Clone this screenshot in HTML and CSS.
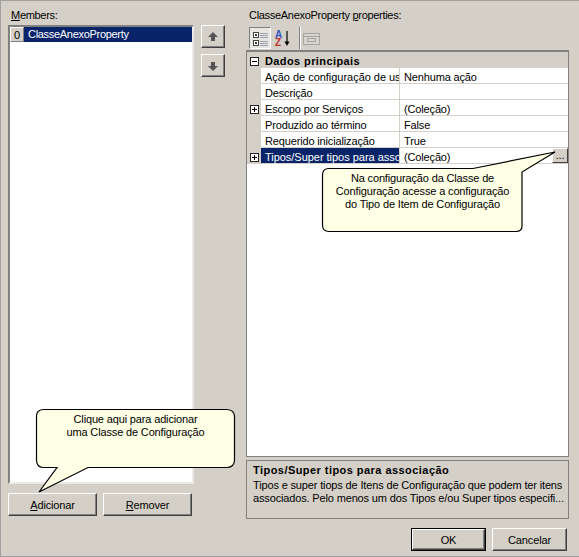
FILE: index.html
```html
<!DOCTYPE html>
<html lang="pt">
<head>
<meta charset="utf-8">
<title>Members</title>
<link rel="stylesheet" href="styles.css">
</head>
<body>
<div class="dialog">
  <div class="columns">
    <section class="members">
      <label class="caption"><u>M</u>embers:</label>
      <div class="members-body">
        <div class="listbox">
          <div class="list-row"><span class="index">0</span><span class="item">ClasseAnexoProperty</span></div>
        </div>
        <div class="arrows">
          <button class="btn arrow"><svg width="12" height="12" viewBox="0 0 12 12"><path d="M6 1 L11 6 H8 V10 H4 V6 H1 Z" fill="#555"/></svg></button>
          <button class="btn arrow"><svg width="12" height="12" viewBox="0 0 12 12"><path d="M6 11 L11 6 H8 V2 H4 V6 H1 Z" fill="#555"/></svg></button>
        </div>
      </div>
      <div class="list-actions">
        <button class="btn"><u>A</u>dicionar</button>
        <button class="btn"><u>R</u>emover</button>
      </div>
    </section>
    <section class="props">
      <label class="caption">ClasseAnexoProperty <u>p</u>roperties:</label>
      <div class="toolbar">
        <span class="tool active"><svg width="18" height="18" viewBox="0 0 18 18"><rect x="2.500" y="3.500" width="5" height="5" fill="#fff" stroke="#444"/><path d="M4 6h2M5 5v2" stroke="#000"/><rect x="2.500" y="11.500" width="5" height="5" fill="#fff" stroke="#444"/><path d="M4 14h2M5 13v2" stroke="#000"/><path d="M9 4.500h8M9 6.500h8M9 8.500h8M9 12.500h8M9 14.500h8M9 16.500h8" stroke="#9aa0b0"/></svg></span>
        <span class="tool"><svg width="20" height="20" viewBox="0 0 20 20"><text x="2" y="10" class="az a">A</text><text x="2" y="18" class="az z">Z</text><path d="M14 3v12" stroke="#000" stroke-width="1.200"/><path d="M11.500 13.500l2.500 4.500 2.500-4.500z" fill="#000"/></svg></span>
        <span class="tool-sep"></span>
        <span class="tool tool-wide"><svg width="18" height="14" viewBox="0 0 18 14"><rect x="0.500" y="2.500" width="16" height="11" fill="#d8d5ce" stroke="#a5a39e"/><path d="M1 5.500h15" stroke="#a5a39e"/><rect x="4.500" y="7.500" width="8" height="3" fill="none" stroke="#a5a39e"/></svg></span>
      </div>
      <div class="grid">
        <div class="category"><span class="gutter"><svg class="expander" width="9" height="9" viewBox="0 0 9 9"><rect x="0.500" y="0.500" width="8" height="8" fill="#fff" stroke="#222"/><path d="M2 4.500h5" stroke="#000"/></svg></span><span class="category-name">Dados principais</span></div>
        <div class="prop"><span class="gutter"></span><span class="name long">Ação de configuração de usuário</span><span class="value">Nenhuma ação</span></div>
        <div class="prop"><span class="gutter"></span><span class="name">Descrição</span><span class="value"></span></div>
        <div class="prop"><span class="gutter"><svg class="expander" width="9" height="9" viewBox="0 0 9 9"><rect x="0.500" y="0.500" width="8" height="8" fill="#fff" stroke="#222"/><path d="M2 4.500h5M4.500 2v5" stroke="#000"/></svg></span><span class="name">Escopo por Serviços</span><span class="value">(Coleção)</span></div>
        <div class="prop"><span class="gutter"></span><span class="name">Produzido ao término</span><span class="value">False</span></div>
        <div class="prop"><span class="gutter"></span><span class="name">Requerido inicialização</span><span class="value">True</span></div>
        <div class="prop current"><span class="gutter"><svg class="expander" width="9" height="9" viewBox="0 0 9 9"><rect x="0.500" y="0.500" width="8" height="8" fill="#fff" stroke="#222"/><path d="M2 4.500h5M4.500 2v5" stroke="#000"/></svg></span><span class="name long">Tipos/Super tipos para associação</span><span class="value">(Coleção)<span class="ellipsis">...</span></span></div>
      </div>
      <div class="help">
        <strong>Tipos/Super tipos para associação</strong>
        <p>Tipos e super tiops de Itens de Configuração que podem ter itens<br>associados. Pelo menos um dos Tipos e/ou Super tipos especifi...</p>
      </div>
    </section>
  </div>
  <div class="footer">
    <button class="btn default">OK</button>
    <button class="btn">Cancelar</button>
  </div>

  <div class="callout callout-grid">
    <svg width="236" height="84" viewBox="0 0 236 84"><path d="M7 18.500 H152 L234 2 L201 22 V76 Q201 81.500 195 81.500 H8 Q1.500 81.500 1.500 75 V25 Q1.500 19 7 18.500 Z" fill="#ffffe6" stroke="#000" stroke-width="1.200"/></svg>
    <p>Na configuração da Classe de<br>Configuração acesse a configuração<br>do Tipo de Item de Configuração</p>
  </div>
  <div class="callout callout-add">
    <svg width="202" height="86" viewBox="0 0 202 86"><path d="M8 1.500 H192 Q199 2 199.500 8 V52 Q199.500 59 192 59.500 H53 L4 84 L22 59.500 H8 Q1.500 59 1.500 52 V8 Q1.500 2 8 1.500 Z" fill="#ffffe6" stroke="#000" stroke-width="1.200"/></svg>
    <p>Clique aqui para adicionar<br>uma Classe de Configuração</p>
  </div>
</div>
</body>
</html>
```
FILE: styles.css
```css
* { box-sizing: border-box; }
html, body { margin: 0; padding: 0; }
body {
  width: 579px;
  height: 557px;
  overflow: hidden;
  font-family: "Liberation Sans", Arial, sans-serif;
  font-size: 11px;
  letter-spacing: -0.15px;
  color: #000;
  background: #d4d0c8;
}
.dialog {
  position: relative;
  width: 579px;
  height: 557px;
  padding: 8px 10px 5px 7px;
  display: flex;
  flex-direction: column;
  border-top: 1px solid #a0a0a0;
  border-left: 1px solid #a0a0a0;
  border-bottom: 1px solid #a0a0a0;
}
.columns { display: flex; flex: 1; gap: 21px; min-height: 0; }
.caption { display: block; height: 16px; line-height: 13px; padding-left: 3px; letter-spacing: -0.3px; }
.members { width: 217px; flex: none; display: flex; flex-direction: column; }
.members-body { display: flex; gap: 7px; }
.listbox {
  width: 186px;
  height: 459px;
  background: #fff;
  border: 2px solid;
  border-color: #808080 #eceae6 #eceae6 #808080;
}
.list-row { display: flex; height: 15px; line-height: 14px; }
.index {
  width: 14px;
  text-align: center;
  background: #d4d0c8;
  border: 1px solid;
  border-color: #fff #808080 #808080 #fff;
}
.item { flex: 1; background: #0a246a; color: #fff; padding-left: 4px; letter-spacing: -0.3px; }
.arrows { display: flex; flex-direction: column; gap: 6px; }
.btn {
  font: inherit;
  letter-spacing: inherit;
  color: #000;
  padding: 0;
  background: #d4d0c8;
  border: 1px solid;
  border-color: #fff #404040 #404040 #fff;
  box-shadow: inset -1px -1px 0 #808080;
  display: flex;
  align-items: center;
  justify-content: center;
}
.arrow { width: 24px; height: 23px; }
.list-actions { display: flex; gap: 6px; margin-top: 9px; }
.list-actions .btn { width: 89px; height: 23px; }
.props { flex: 1; min-width: 0; display: flex; flex-direction: column; }
.toolbar { display: flex; align-items: center; height: 25px; padding: 1px 0 1px 3px; gap: 1px; }
.tool { width: 22px; height: 22px; display: flex; align-items: center; justify-content: center; }
.tool-wide { width: 18px; }
.tool.active { background: #e8e6e1; border: 1px solid; border-color: #808080 #fff #fff #808080; }
.tool-sep { width: 2px; height: 22px; margin: 0 1px 0 4px; border-left: 1px solid #808080; border-right: 1px solid #fff; }
.az { font-size: 10px; font-weight: bold; letter-spacing: 0; }
.az.a { fill: #2f55c0; }
.az.z { fill: #c03030; }
.grid {
  height: 407px;
  background: #fff;
  border: 1px solid #808080;
  border-top-width: 2px;
  overflow: hidden;
}
.category, .prop { display: flex; height: 16px; }
.category { background: #d4d0c8; font-weight: bold; }
.gutter { width: 14px; flex: none; padding-top: 2px; background: #d4d0c8; display: flex; align-items: center; justify-content: center; }
.expander { display: block; }
.category-name { padding: 2px 0 0 4px; line-height: 15px; letter-spacing: 0.4px; }
.name {
  width: 139px; flex: none; padding: 2px 0 0 4px; line-height: 15px; white-space: nowrap; overflow: hidden;
  border-bottom: 1px solid #d4d0c8; border-right: 1px solid #d4d0c8;
}
.name.long { letter-spacing: -0.03px; }
.value { flex: 1; position: relative; padding: 2px 0 0 4px; line-height: 15px; border-bottom: 1px solid #d4d0c8; }
.current .name { background: #0a246a; color: #fff; }
.ellipsis {
  position: absolute; right: 0; top: 0; width: 16px; height: 15px; line-height: 13px;
  text-align: center; background: #d4d0c8;
  border: 1px solid; border-color: #fff #404040 #404040 #fff;
}
.help {
  height: 59px;
  margin-top: 3px;
  padding: 3px 6px;
  border: 1px solid #808080;
  line-height: 13px;
  white-space: nowrap;
}
.help strong { display: block; letter-spacing: 0.45px; margin-bottom: 2px; }
.help p { margin: 0; }
.footer { display: flex; justify-content: flex-end; gap: 6px; padding-right: 2px; }
.footer .btn { width: 75px; height: 23px; }
.footer .default { outline: 1px solid #000; outline-offset: -1px; border-width: 2px; }
.callout { position: absolute; }
.callout svg { position: absolute; left: 0; top: 0; display: block; }
.callout p { position: relative; margin: 0; text-align: center; line-height: 13px; }
.callout-grid { left: 320px; top: 149px; width: 236px; height: 84px; }
.callout-grid p { width: 203px; padding-top: 22px; }
.callout-add { left: 34px; top: 407px; width: 202px; height: 86px; }
.callout-add p { width: 201px; padding-top: 5px; }
```
